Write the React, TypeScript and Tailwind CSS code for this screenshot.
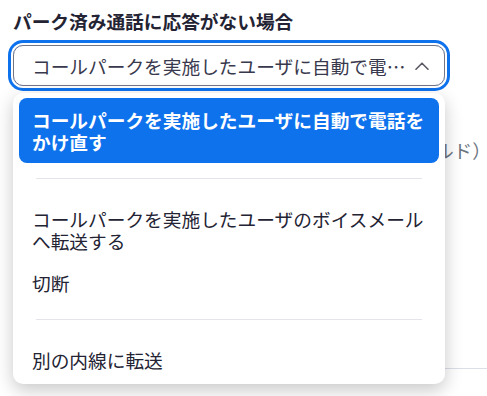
import { useState } from 'react';

const options = [
  'コールパークを実施したユーザに自動で電話をかけ直す',
  'コールパークを実施したユーザのボイスメールへ転送する',
  '切断',
  '別の内線に転送',
];

function ChevronUp() {
  return (
    <svg width="14" height="8" viewBox="0 0 14 8" fill="none" className="shrink-0">
      <path d="M1 7.2L7 1.2L13 7.2" stroke="#5a5a66" strokeWidth="1.6" strokeLinecap="round" strokeLinejoin="round" />
    </svg>
  );
}

export default function App() {
  const [selected] = useState(0);

  return (
    <div className="relative h-[396px] w-[487px] overflow-hidden bg-white font-['Noto_Sans_CJK_JP',sans-serif] text-[18.7px] text-[#232333]">
      {/* Page behind the menu */}
      <div className="pl-[13px] pt-[8px]">
        <div className="font-bold leading-[26px]">パーク済み通話に応答がない場合</div>
        <div className="mt-[11px] flex h-[41px] w-[432px] items-center rounded-[10px] border border-[#747487] pl-[18px] pr-[15px] ring-[3px] ring-[#0e72ed] ring-offset-2">
          <span className="min-w-0 flex-1 truncate pr-[6px] leading-[24px] text-[#39394d]">{options[selected]}</span>
          <ChevronUp />
        </div>
        <div className="-ml-[13px] mt-[51px] flex w-[491px] justify-end whitespace-nowrap leading-[26px] text-[#6e7680]">
          フィールド）
        </div>
        <div className="mt-[205px] h-px w-[474px] bg-[#dcdfe8]" />
      </div>

      {/* Open menu */}
      <div className="absolute left-[13px] top-[93px] w-[432px] rounded-[10px] bg-white px-[6px] pb-[3px] pt-[5px] shadow-[0_6px_18px_rgba(0,0,0,0.22)]">
        <div className="rounded-[8px] bg-[#0e72ed] px-[13px] py-[10.5px] font-bold leading-[22px] text-white">
          {options[0]}
        </div>
        <div className="mx-[17px] mb-[19px] mt-[15px] h-px bg-[#e4e4ea]" />
        <div className="px-[13px] py-[10px] leading-[22px]">{options[1]}</div>
        <div className="px-[13px] py-[10px] leading-[22px]">{options[2]}</div>
        <div className="mx-[17px] mb-[19px] mt-[15px] h-px bg-[#e4e4ea]" />
        <div className="px-[13px] py-[10px] leading-[22px]">{options[3]}</div>
      </div>
    </div>
  );
}
